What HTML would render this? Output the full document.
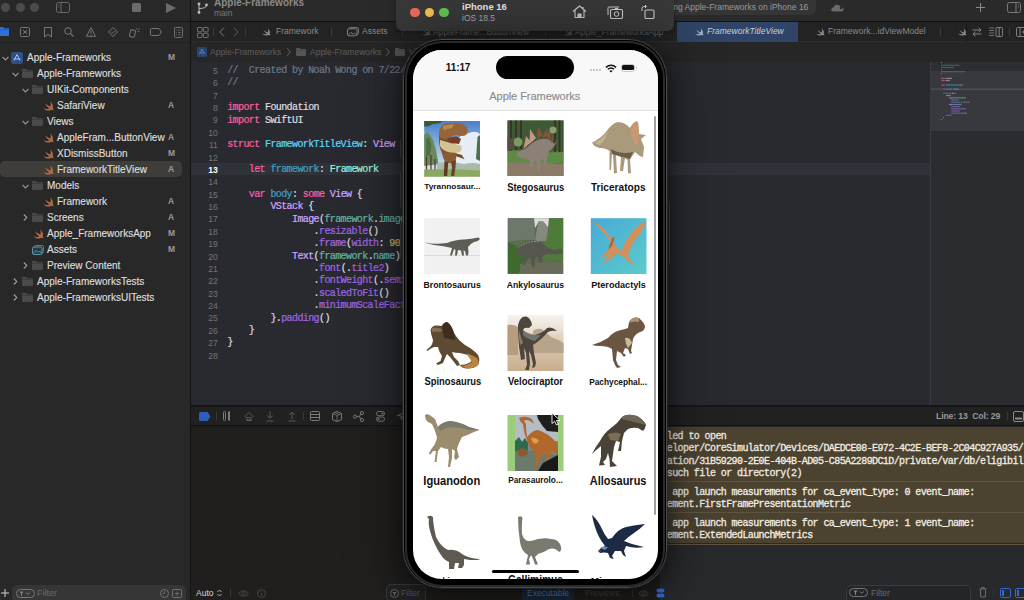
<!DOCTYPE html>
<html><head><meta charset="utf-8">
<style>
*{margin:0;padding:0;box-sizing:border-box}
html,body{width:1024px;height:600px;overflow:hidden;background:#262626;font-family:"Liberation Sans",sans-serif;position:relative}
.a{position:absolute}
.t{position:absolute;white-space:nowrap;line-height:1}
.mono{font-family:"Liberation Mono",monospace;-webkit-text-stroke:0.2px}
svg{position:absolute;overflow:visible}
</style></head><body>

<!-- LEFT NAVIGATOR -->
<div class="a" id="nav" style="left:0;top:0;width:190px;height:600px;background:#282828"></div>
<div class="a" style="left:0;top:21px;width:190px;height:1px;background:#1a1a1a"></div>
<div class="a" style="left:0;top:42px;width:190px;height:1px;background:#1f1f1f"></div>
<div class="a" style="left:190px;top:0;width:1px;height:600px;background:#121212"></div>
<div class="a" style="left:0;top:161px;width:182px;height:16px;background:#3e3d3a;border-radius:5px"></div>
<svg style="left:2px;top:55.5px" width="7" height="5"><path d="M0.5 0.8L3.5 3.8L6.5 0.8" stroke="#9a9a9a" stroke-width="1.2" fill="none"/></svg>
<svg style="left:11px;top:51.5px" width="12" height="12"><rect x="0" y="0" width="12" height="12" rx="2.2" fill="#2e5089"/><path d="M6 2.5L3 8.5M6 2.5L9 8.5M2.5 7H9.5" stroke="#a9c2ea" stroke-width="1" fill="none"/></svg>
<div class="t" style="left:27px;top:52.6px;font-size:10px;color:#dedede;-webkit-text-stroke:0.15px #dedede">Apple-Frameworks</div>
<div class="t" style="left:168px;top:53.0px;font-size:8.5px;font-weight:bold;color:#9a9a9a">M</div>
<svg style="left:12px;top:71.5px" width="7" height="5"><path d="M0.5 0.8L3.5 3.8L6.5 0.8" stroke="#9a9a9a" stroke-width="1.2" fill="none"/></svg>
<svg style="left:22px;top:69.0px" width="11" height="9"><path d="M0 1.2Q0 0 1.2 0H4L5 1.2H9.8Q11 1.2 11 2.4V7.8Q11 9 9.8 9H1.2Q0 9 0 7.8Z" fill="#4a4a4a"/><rect x="0" y="2.2" width="11" height="0.8" fill="#3a3a3a"/></svg>
<div class="t" style="left:37px;top:68.6px;font-size:10px;color:#dedede;-webkit-text-stroke:0.15px #dedede">Apple-Frameworks</div>
<svg style="left:22px;top:87.5px" width="7" height="5"><path d="M0.5 0.8L3.5 3.8L6.5 0.8" stroke="#9a9a9a" stroke-width="1.2" fill="none"/></svg>
<svg style="left:32px;top:85.0px" width="11" height="9"><path d="M0 1.2Q0 0 1.2 0H4L5 1.2H9.8Q11 1.2 11 2.4V7.8Q11 9 9.8 9H1.2Q0 9 0 7.8Z" fill="#4a4a4a"/><rect x="0" y="2.2" width="11" height="0.8" fill="#3a3a3a"/></svg>
<div class="t" style="left:47px;top:84.6px;font-size:10px;color:#dedede;-webkit-text-stroke:0.15px #dedede">UIKit-Components</div>
<svg style="left:43px;top:100.5px" width="11" height="10"><path d="M7.2 0.6C9.6 2.4 10.6 5 9.8 7.2C10.6 8.2 10.6 9.2 10.4 9.6C9.8 8.8 8.8 8.6 8 9C5.6 10.2 2.2 9.4 0 7C2.2 8.2 4.6 8.4 6.2 7.4C4.4 6.2 2.6 4.2 1.4 2.6C2.8 3.8 4.6 5.2 5.6 5.8C4.4 4.8 3 3.2 2.2 1.8C3.8 3.4 6 5.2 7.2 5.8C8 4.2 8 2.4 7.2 0.6Z" fill="#b26a3e"/></svg>
<div class="t" style="left:57px;top:100.6px;font-size:10px;color:#dedede;-webkit-text-stroke:0.15px #dedede">SafariView</div>
<div class="t" style="left:168px;top:101.0px;font-size:8.5px;font-weight:bold;color:#9a9a9a">A</div>
<svg style="left:22px;top:119.5px" width="7" height="5"><path d="M0.5 0.8L3.5 3.8L6.5 0.8" stroke="#9a9a9a" stroke-width="1.2" fill="none"/></svg>
<svg style="left:32px;top:117.0px" width="11" height="9"><path d="M0 1.2Q0 0 1.2 0H4L5 1.2H9.8Q11 1.2 11 2.4V7.8Q11 9 9.8 9H1.2Q0 9 0 7.8Z" fill="#4a4a4a"/><rect x="0" y="2.2" width="11" height="0.8" fill="#3a3a3a"/></svg>
<div class="t" style="left:47px;top:116.6px;font-size:10px;color:#dedede;-webkit-text-stroke:0.15px #dedede">Views</div>
<svg style="left:43px;top:132.5px" width="11" height="10"><path d="M7.2 0.6C9.6 2.4 10.6 5 9.8 7.2C10.6 8.2 10.6 9.2 10.4 9.6C9.8 8.8 8.8 8.6 8 9C5.6 10.2 2.2 9.4 0 7C2.2 8.2 4.6 8.4 6.2 7.4C4.4 6.2 2.6 4.2 1.4 2.6C2.8 3.8 4.6 5.2 5.6 5.8C4.4 4.8 3 3.2 2.2 1.8C3.8 3.4 6 5.2 7.2 5.8C8 4.2 8 2.4 7.2 0.6Z" fill="#b26a3e"/></svg>
<div class="t" style="left:57px;top:132.6px;font-size:10px;color:#dedede;-webkit-text-stroke:0.15px #dedede">AppleFram...ButtonView</div>
<div class="t" style="left:168px;top:133.0px;font-size:8.5px;font-weight:bold;color:#9a9a9a">A</div>
<svg style="left:43px;top:148.5px" width="11" height="10"><path d="M7.2 0.6C9.6 2.4 10.6 5 9.8 7.2C10.6 8.2 10.6 9.2 10.4 9.6C9.8 8.8 8.8 8.6 8 9C5.6 10.2 2.2 9.4 0 7C2.2 8.2 4.6 8.4 6.2 7.4C4.4 6.2 2.6 4.2 1.4 2.6C2.8 3.8 4.6 5.2 5.6 5.8C4.4 4.8 3 3.2 2.2 1.8C3.8 3.4 6 5.2 7.2 5.8C8 4.2 8 2.4 7.2 0.6Z" fill="#b26a3e"/></svg>
<div class="t" style="left:57px;top:148.6px;font-size:10px;color:#dedede;-webkit-text-stroke:0.15px #dedede">XDismissButton</div>
<div class="t" style="left:168px;top:149.0px;font-size:8.5px;font-weight:bold;color:#9a9a9a">M</div>
<svg style="left:43px;top:164.5px" width="11" height="10"><path d="M7.2 0.6C9.6 2.4 10.6 5 9.8 7.2C10.6 8.2 10.6 9.2 10.4 9.6C9.8 8.8 8.8 8.6 8 9C5.6 10.2 2.2 9.4 0 7C2.2 8.2 4.6 8.4 6.2 7.4C4.4 6.2 2.6 4.2 1.4 2.6C2.8 3.8 4.6 5.2 5.6 5.8C4.4 4.8 3 3.2 2.2 1.8C3.8 3.4 6 5.2 7.2 5.8C8 4.2 8 2.4 7.2 0.6Z" fill="#b26a3e"/></svg>
<div class="t" style="left:57px;top:164.6px;font-size:10px;color:#dedede;-webkit-text-stroke:0.15px #dedede">FrameworkTitleView</div>
<div class="t" style="left:168px;top:165.0px;font-size:8.5px;font-weight:bold;color:#9a9a9a">A</div>
<svg style="left:22px;top:183.5px" width="7" height="5"><path d="M0.5 0.8L3.5 3.8L6.5 0.8" stroke="#9a9a9a" stroke-width="1.2" fill="none"/></svg>
<svg style="left:32px;top:181.0px" width="11" height="9"><path d="M0 1.2Q0 0 1.2 0H4L5 1.2H9.8Q11 1.2 11 2.4V7.8Q11 9 9.8 9H1.2Q0 9 0 7.8Z" fill="#4a4a4a"/><rect x="0" y="2.2" width="11" height="0.8" fill="#3a3a3a"/></svg>
<div class="t" style="left:47px;top:180.6px;font-size:10px;color:#dedede;-webkit-text-stroke:0.15px #dedede">Models</div>
<svg style="left:43px;top:196.5px" width="11" height="10"><path d="M7.2 0.6C9.6 2.4 10.6 5 9.8 7.2C10.6 8.2 10.6 9.2 10.4 9.6C9.8 8.8 8.8 8.6 8 9C5.6 10.2 2.2 9.4 0 7C2.2 8.2 4.6 8.4 6.2 7.4C4.4 6.2 2.6 4.2 1.4 2.6C2.8 3.8 4.6 5.2 5.6 5.8C4.4 4.8 3 3.2 2.2 1.8C3.8 3.4 6 5.2 7.2 5.8C8 4.2 8 2.4 7.2 0.6Z" fill="#b26a3e"/></svg>
<div class="t" style="left:57px;top:196.6px;font-size:10px;color:#dedede;-webkit-text-stroke:0.15px #dedede">Framework</div>
<div class="t" style="left:168px;top:197.0px;font-size:8.5px;font-weight:bold;color:#9a9a9a">A</div>
<svg style="left:23px;top:214.0px" width="5" height="7"><path d="M0.8 0.5L3.8 3.5L0.8 6.5" stroke="#9a9a9a" stroke-width="1.2" fill="none"/></svg>
<svg style="left:32px;top:213.0px" width="11" height="9"><path d="M0 1.2Q0 0 1.2 0H4L5 1.2H9.8Q11 1.2 11 2.4V7.8Q11 9 9.8 9H1.2Q0 9 0 7.8Z" fill="#4a4a4a"/><rect x="0" y="2.2" width="11" height="0.8" fill="#3a3a3a"/></svg>
<div class="t" style="left:47px;top:212.6px;font-size:10px;color:#dedede;-webkit-text-stroke:0.15px #dedede">Screens</div>
<div class="t" style="left:168px;top:213.0px;font-size:8.5px;font-weight:bold;color:#9a9a9a">A</div>
<svg style="left:33px;top:228.5px" width="11" height="10"><path d="M7.2 0.6C9.6 2.4 10.6 5 9.8 7.2C10.6 8.2 10.6 9.2 10.4 9.6C9.8 8.8 8.8 8.6 8 9C5.6 10.2 2.2 9.4 0 7C2.2 8.2 4.6 8.4 6.2 7.4C4.4 6.2 2.6 4.2 1.4 2.6C2.8 3.8 4.6 5.2 5.6 5.8C4.4 4.8 3 3.2 2.2 1.8C3.8 3.4 6 5.2 7.2 5.8C8 4.2 8 2.4 7.2 0.6Z" fill="#b26a3e"/></svg>
<div class="t" style="left:47px;top:228.6px;font-size:10px;color:#dedede;-webkit-text-stroke:0.15px #dedede">Apple_FrameworksApp</div>
<div class="t" style="left:168px;top:229.0px;font-size:8.5px;font-weight:bold;color:#9a9a9a">M</div>
<svg style="left:32px;top:244.5px" width="12" height="10"><rect x="2" y="0.5" width="9.5" height="7.5" rx="1.5" fill="none" stroke="#4e7f96" stroke-width="1"/><rect x="0.5" y="2" width="9.5" height="7.5" rx="1.5" fill="#2c3a40" stroke="#5f9ab5" stroke-width="1"/><path d="M1.5 8.5L4 5.5L6 7.5L7.5 6L9.5 8.5" stroke="#5f9ab5" stroke-width="0.9" fill="none"/></svg>
<div class="t" style="left:47px;top:244.6px;font-size:10px;color:#dedede;-webkit-text-stroke:0.15px #dedede">Assets</div>
<div class="t" style="left:168px;top:245.0px;font-size:8.5px;font-weight:bold;color:#9a9a9a">M</div>
<svg style="left:23px;top:262.0px" width="5" height="7"><path d="M0.8 0.5L3.8 3.5L0.8 6.5" stroke="#9a9a9a" stroke-width="1.2" fill="none"/></svg>
<svg style="left:32px;top:261.0px" width="11" height="9"><path d="M0 1.2Q0 0 1.2 0H4L5 1.2H9.8Q11 1.2 11 2.4V7.8Q11 9 9.8 9H1.2Q0 9 0 7.8Z" fill="#4a4a4a"/><rect x="0" y="2.2" width="11" height="0.8" fill="#3a3a3a"/></svg>
<div class="t" style="left:47px;top:260.6px;font-size:10px;color:#dedede;-webkit-text-stroke:0.15px #dedede">Preview Content</div>
<svg style="left:13px;top:278.0px" width="5" height="7"><path d="M0.8 0.5L3.8 3.5L0.8 6.5" stroke="#9a9a9a" stroke-width="1.2" fill="none"/></svg>
<svg style="left:22px;top:277.0px" width="11" height="9"><path d="M0 1.2Q0 0 1.2 0H4L5 1.2H9.8Q11 1.2 11 2.4V7.8Q11 9 9.8 9H1.2Q0 9 0 7.8Z" fill="#4a4a4a"/><rect x="0" y="2.2" width="11" height="0.8" fill="#3a3a3a"/></svg>
<div class="t" style="left:37px;top:276.6px;font-size:10px;color:#dedede;-webkit-text-stroke:0.15px #dedede">Apple-FrameworksTests</div>
<svg style="left:13px;top:294.0px" width="5" height="7"><path d="M0.8 0.5L3.8 3.5L0.8 6.5" stroke="#9a9a9a" stroke-width="1.2" fill="none"/></svg>
<svg style="left:22px;top:293.0px" width="11" height="9"><path d="M0 1.2Q0 0 1.2 0H4L5 1.2H9.8Q11 1.2 11 2.4V7.8Q11 9 9.8 9H1.2Q0 9 0 7.8Z" fill="#4a4a4a"/><rect x="0" y="2.2" width="11" height="0.8" fill="#3a3a3a"/></svg>
<div class="t" style="left:37px;top:292.6px;font-size:10px;color:#dedede;-webkit-text-stroke:0.15px #dedede">Apple-FrameworksUITests</div>
<!-- traffic lights dim -->
<div class="a" style="left:1.3px;top:3px;width:9px;height:9px;border-radius:50%;background:#4b4b4b"></div>
<div class="a" style="left:15.5px;top:3px;width:9px;height:9px;border-radius:50%;background:#4b4b4b"></div>
<div class="a" style="left:30.2px;top:3px;width:9px;height:9px;border-radius:50%;background:#4b4b4b"></div>
<!-- sidebar icon -->
<svg style="left:55.5px;top:1.5px" width="14" height="11"><rect x="0.5" y="0.5" width="13" height="10" rx="2" fill="none" stroke="#6a6a6a" stroke-width="1"/><path d="M5 0.5V10.5" stroke="#6a6a6a" stroke-width="1"/><path d="M2 3H3.5M2 5H3.5" stroke="#6a6a6a" stroke-width="0.8"/></svg>
<!-- stop -->
<div class="a" style="left:132px;top:3px;width:9px;height:8.5px;border-radius:1.5px;background:#6b6b6b"></div>
<!-- play -->
<svg style="left:166px;top:2.5px" width="10" height="10"><path d="M0 0L10 5L0 10Z" fill="#6b6b6b"/></svg>

<!-- navigator tab icons -->
<svg style="left:0;top:27px" width="9" height="9"><path d="M-2 0H3L4 1.3H9V9H-2Z" fill="#2f6fd6"/><rect x="-2" y="2.4" width="11" height="0.7" fill="#2459b0"/></svg>
<svg style="left:20px;top:27px" width="10" height="10"><rect x="0.5" y="0.5" width="9" height="9" rx="1.2" fill="none" stroke="#777" stroke-width="1"/><path d="M3 3L7 7M7 3L3 7" stroke="#777" stroke-width="1"/></svg>
<svg style="left:44px;top:26.5px" width="8" height="11"><path d="M0.5 0.5H7.5V10L4 7.5L0.5 10Z" fill="none" stroke="#777" stroke-width="1"/></svg>
<svg style="left:64px;top:27px" width="10" height="10"><circle cx="4" cy="4" r="3.3" fill="none" stroke="#777" stroke-width="1"/><path d="M6.5 6.5L9.5 9.5" stroke="#777" stroke-width="1.1"/></svg>
<svg style="left:86px;top:26.5px" width="10" height="10"><path d="M5 0.7L9.5 9.3H0.5Z" fill="none" stroke="#777" stroke-width="1" stroke-linejoin="round"/><path d="M5 3.8V6.5M5 7.4V8.3" stroke="#777" stroke-width="1"/></svg>
<svg style="left:108px;top:27px" width="10" height="10"><path d="M5 0.5L9.5 5L5 9.5L0.5 5Z" fill="none" stroke="#777" stroke-width="1" stroke-linejoin="round"/><path d="M3.3 5L4.5 6.2L6.8 3.8" stroke="#777" stroke-width="1" fill="none"/></svg>
<svg style="left:129px;top:27px" width="11" height="11"><rect x="1" y="3" width="5" height="7" rx="1" transform="rotate(15 3.5 6.5)" fill="none" stroke="#777" stroke-width="1"/><path d="M7 1L8 3M9 2.5L10.5 1.5M8.5 4.5H10.5" stroke="#777" stroke-width="0.8"/></svg>
<svg style="left:150px;top:28px" width="12" height="8"><path d="M0.5 1.5Q0.5 0.5 1.5 0.5H9L11.5 4L9 7.5H1.5Q0.5 7.5 0.5 6.5Z" fill="none" stroke="#777" stroke-width="1"/></svg>
<svg style="left:174px;top:26.5px" width="9" height="11"><rect x="0.5" y="0.5" width="8" height="10" rx="1.2" fill="none" stroke="#777" stroke-width="0.9"/><path d="M2.2 3.2H2.8M2.2 5.5H2.8M2.2 7.8H2.8" stroke="#777" stroke-width="0.9"/><path d="M4 3.2H6.8M4 5.5H6.8M4 7.8H6.8" stroke="#777" stroke-width="0.7"/></svg>

<!-- bottom filter -->
<svg style="left:1px;top:589px" width="8" height="8"><path d="M4 0V8M0 4H8" stroke="#cfcfcf" stroke-width="1"/></svg>
<div class="a" style="left:12px;top:585px;width:174px;height:18px;border-radius:5px;background:#363636"></div>
<div class="a" style="left:15.5px;top:588.5px;width:19px;height:9px;border-radius:5px;border:1px solid #777"></div>
<svg style="left:19px;top:590.5px" width="12" height="6"><path d="M0.5 0.5H4.5L3 2.5V4.5L2 5V2.5Z" fill="#888"/><path d="M7 1.5L8.8 3.3L10.6 1.5" stroke="#888" stroke-width="1" fill="none"/></svg>
<div class="t" style="left:37px;top:588.8px;font-size:9px;color:#6a6a6a">Filter</div>
<svg style="left:160px;top:588.5px" width="9" height="9"><circle cx="4.5" cy="4.5" r="4" fill="none" stroke="#777" stroke-width="0.9"/><path d="M4.5 2V4.5H2.5" stroke="#777" stroke-width="0.8" fill="none"/></svg>
<svg style="left:172px;top:588.5px" width="10" height="9"><rect x="0.5" y="0.5" width="9" height="8" rx="1" fill="none" stroke="#777" stroke-width="0.9"/><path d="M3 4.5H7M5 2.5V6.5" stroke="#777" stroke-width="0.8"/></svg>


<!-- EDITOR bars -->
<div class="a" style="left:191px;top:0;width:833px;height:21px;background:#2a2a2a"></div>
<div class="a" style="left:191px;top:21px;width:833px;height:1px;background:#121212"></div>
<div class="a" style="left:191px;top:22px;width:833px;height:20px;background:#232323"></div>
<div class="a" style="left:191px;top:41px;width:833px;height:1px;background:#2e2e2e"></div>
<div class="a" style="left:191px;top:42px;width:833px;height:20px;background:#262626"></div>
<div class="a" style="left:191px;top:62px;width:739px;height:343px;background:#292a30"></div>
<div class="a" style="left:191px;top:163px;width:739px;height:12px;background:#2f3239"></div>

<div class="t" style="left:197px;top:66.90px;width:20.8px;text-align:right;font-size:8.6px;color:#747478;">5</div>
<div class="t mono" style="left:227.2px;top:66.00px;font-size:10px;letter-spacing:-0.6px"><span style="color:#6c7986">//&nbsp;&nbsp;Created&nbsp;by&nbsp;Noah&nbsp;Wong&nbsp;on&nbsp;7/22/25.</span></div>
<div class="t" style="left:197px;top:79.28px;width:20.8px;text-align:right;font-size:8.6px;color:#747478;">6</div>
<div class="t mono" style="left:227.2px;top:78.38px;font-size:10px;letter-spacing:-0.6px"><span style="color:#6c7986">//</span></div>
<div class="t" style="left:197px;top:91.65px;width:20.8px;text-align:right;font-size:8.6px;color:#747478;">7</div>
<div class="t" style="left:197px;top:104.02px;width:20.8px;text-align:right;font-size:8.6px;color:#747478;">8</div>
<div class="t mono" style="left:227.2px;top:103.12px;font-size:10px;letter-spacing:-0.6px"><span style="color:#fc5fa3">import</span><span style="color:#dfdfe0">&nbsp;Foundation</span></div>
<div class="t" style="left:197px;top:116.40px;width:20.8px;text-align:right;font-size:8.6px;color:#747478;">9</div>
<div class="t mono" style="left:227.2px;top:115.50px;font-size:10px;letter-spacing:-0.6px"><span style="color:#fc5fa3">import</span><span style="color:#dfdfe0">&nbsp;SwiftUI</span></div>
<div class="t" style="left:197px;top:128.77px;width:20.8px;text-align:right;font-size:8.6px;color:#747478;">10</div>
<div class="t" style="left:197px;top:141.15px;width:20.8px;text-align:right;font-size:8.6px;color:#747478;">11</div>
<div class="t mono" style="left:227.2px;top:140.25px;font-size:10px;letter-spacing:-0.6px"><span style="color:#fc5fa3">struct</span><span style="color:#dfdfe0">&nbsp;</span><span style="color:#5dd8ff">FrameworkTitleView</span><span style="color:#dfdfe0">:&nbsp;</span><span style="color:#d0a8ff">View</span><span style="color:#dfdfe0">&nbsp;{</span></div>
<div class="t" style="left:197px;top:153.52px;width:20.8px;text-align:right;font-size:8.6px;color:#747478;">12</div>
<div class="t" style="left:197px;top:165.90px;width:20.8px;text-align:right;font-size:8.6px;color:#ffffff;font-weight:bold">13</div>
<div class="t mono" style="left:227.2px;top:165.00px;font-size:10px;letter-spacing:-0.6px"><span style="color:#dfdfe0">&nbsp;&nbsp;&nbsp;&nbsp;</span><span style="color:#fc5fa3">let</span><span style="color:#dfdfe0">&nbsp;</span><span style="color:#41a1c0">framework</span><span style="color:#dfdfe0">:&nbsp;</span><span style="color:#9ef1dd">Framework</span></div>
<div class="t" style="left:197px;top:178.28px;width:20.8px;text-align:right;font-size:8.6px;color:#747478;">14</div>
<div class="t" style="left:197px;top:190.65px;width:20.8px;text-align:right;font-size:8.6px;color:#747478;">15</div>
<div class="t mono" style="left:227.2px;top:189.75px;font-size:10px;letter-spacing:-0.6px"><span style="color:#dfdfe0">&nbsp;&nbsp;&nbsp;&nbsp;</span><span style="color:#fc5fa3">var</span><span style="color:#dfdfe0">&nbsp;</span><span style="color:#41a1c0">body</span><span style="color:#dfdfe0">:&nbsp;</span><span style="color:#fc5fa3">some</span><span style="color:#dfdfe0">&nbsp;</span><span style="color:#d0a8ff">View</span><span style="color:#dfdfe0">&nbsp;{</span></div>
<div class="t" style="left:197px;top:203.02px;width:20.8px;text-align:right;font-size:8.6px;color:#747478;">16</div>
<div class="t mono" style="left:227.2px;top:202.12px;font-size:10px;letter-spacing:-0.6px"><span style="color:#dfdfe0">&nbsp;&nbsp;&nbsp;&nbsp;&nbsp;&nbsp;&nbsp;&nbsp;</span><span style="color:#d0a8ff">VStack</span><span style="color:#dfdfe0">&nbsp;{</span></div>
<div class="t" style="left:197px;top:215.40px;width:20.8px;text-align:right;font-size:8.6px;color:#747478;">17</div>
<div class="t mono" style="left:227.2px;top:214.50px;font-size:10px;letter-spacing:-0.6px"><span style="color:#dfdfe0">&nbsp;&nbsp;&nbsp;&nbsp;&nbsp;&nbsp;&nbsp;&nbsp;&nbsp;&nbsp;&nbsp;&nbsp;</span><span style="color:#d0a8ff">Image</span><span style="color:#dfdfe0">(</span><span style="color:#67b7a4">framework</span><span style="color:#dfdfe0">.</span><span style="color:#67b7a4">imageName</span><span style="color:#dfdfe0">)</span></div>
<div class="t" style="left:197px;top:227.78px;width:20.8px;text-align:right;font-size:8.6px;color:#747478;">18</div>
<div class="t mono" style="left:227.2px;top:226.88px;font-size:10px;letter-spacing:-0.6px"><span style="color:#dfdfe0">&nbsp;&nbsp;&nbsp;&nbsp;&nbsp;&nbsp;&nbsp;&nbsp;&nbsp;&nbsp;&nbsp;&nbsp;&nbsp;&nbsp;&nbsp;&nbsp;.</span><span style="color:#a167e6">resizable</span><span style="color:#dfdfe0">()</span></div>
<div class="t" style="left:197px;top:240.15px;width:20.8px;text-align:right;font-size:8.6px;color:#747478;">19</div>
<div class="t mono" style="left:227.2px;top:239.25px;font-size:10px;letter-spacing:-0.6px"><span style="color:#dfdfe0">&nbsp;&nbsp;&nbsp;&nbsp;&nbsp;&nbsp;&nbsp;&nbsp;&nbsp;&nbsp;&nbsp;&nbsp;&nbsp;&nbsp;&nbsp;&nbsp;.</span><span style="color:#a167e6">frame</span><span style="color:#dfdfe0">(</span><span style="color:#a167e6">width</span><span style="color:#dfdfe0">:&nbsp;</span><span style="color:#d0bf69">90</span><span style="color:#dfdfe0">,&nbsp;</span><span style="color:#a167e6">height</span><span style="color:#dfdfe0">:&nbsp;</span><span style="color:#d0bf69">90</span><span style="color:#dfdfe0">)</span></div>
<div class="t" style="left:197px;top:252.52px;width:20.8px;text-align:right;font-size:8.6px;color:#747478;">20</div>
<div class="t mono" style="left:227.2px;top:251.62px;font-size:10px;letter-spacing:-0.6px"><span style="color:#dfdfe0">&nbsp;&nbsp;&nbsp;&nbsp;&nbsp;&nbsp;&nbsp;&nbsp;&nbsp;&nbsp;&nbsp;&nbsp;</span><span style="color:#d0a8ff">Text</span><span style="color:#dfdfe0">(</span><span style="color:#67b7a4">framework</span><span style="color:#dfdfe0">.</span><span style="color:#67b7a4">name</span><span style="color:#dfdfe0">)</span></div>
<div class="t" style="left:197px;top:264.90px;width:20.8px;text-align:right;font-size:8.6px;color:#747478;">21</div>
<div class="t mono" style="left:227.2px;top:264.00px;font-size:10px;letter-spacing:-0.6px"><span style="color:#dfdfe0">&nbsp;&nbsp;&nbsp;&nbsp;&nbsp;&nbsp;&nbsp;&nbsp;&nbsp;&nbsp;&nbsp;&nbsp;&nbsp;&nbsp;&nbsp;&nbsp;.</span><span style="color:#a167e6">font</span><span style="color:#dfdfe0">(.</span><span style="color:#a167e6">title2</span><span style="color:#dfdfe0">)</span></div>
<div class="t" style="left:197px;top:277.28px;width:20.8px;text-align:right;font-size:8.6px;color:#747478;">22</div>
<div class="t mono" style="left:227.2px;top:276.38px;font-size:10px;letter-spacing:-0.6px"><span style="color:#dfdfe0">&nbsp;&nbsp;&nbsp;&nbsp;&nbsp;&nbsp;&nbsp;&nbsp;&nbsp;&nbsp;&nbsp;&nbsp;&nbsp;&nbsp;&nbsp;&nbsp;.</span><span style="color:#a167e6">fontWeight</span><span style="color:#dfdfe0">(.</span><span style="color:#a167e6">semibold</span><span style="color:#dfdfe0">)</span></div>
<div class="t" style="left:197px;top:289.65px;width:20.8px;text-align:right;font-size:8.6px;color:#747478;">23</div>
<div class="t mono" style="left:227.2px;top:288.75px;font-size:10px;letter-spacing:-0.6px"><span style="color:#dfdfe0">&nbsp;&nbsp;&nbsp;&nbsp;&nbsp;&nbsp;&nbsp;&nbsp;&nbsp;&nbsp;&nbsp;&nbsp;&nbsp;&nbsp;&nbsp;&nbsp;.</span><span style="color:#a167e6">scaledToFit</span><span style="color:#dfdfe0">()</span></div>
<div class="t" style="left:197px;top:302.02px;width:20.8px;text-align:right;font-size:8.6px;color:#747478;">24</div>
<div class="t mono" style="left:227.2px;top:301.12px;font-size:10px;letter-spacing:-0.6px"><span style="color:#dfdfe0">&nbsp;&nbsp;&nbsp;&nbsp;&nbsp;&nbsp;&nbsp;&nbsp;&nbsp;&nbsp;&nbsp;&nbsp;&nbsp;&nbsp;&nbsp;&nbsp;.</span><span style="color:#a167e6">minimumScaleFactor</span><span style="color:#dfdfe0">(</span><span style="color:#d0bf69">0.6</span><span style="color:#dfdfe0">)</span></div>
<div class="t" style="left:197px;top:314.40px;width:20.8px;text-align:right;font-size:8.6px;color:#747478;">25</div>
<div class="t mono" style="left:227.2px;top:313.50px;font-size:10px;letter-spacing:-0.6px"><span style="color:#dfdfe0">&nbsp;&nbsp;&nbsp;&nbsp;&nbsp;&nbsp;&nbsp;&nbsp;}.</span><span style="color:#a167e6">padding</span><span style="color:#dfdfe0">()</span></div>
<div class="t" style="left:197px;top:326.78px;width:20.8px;text-align:right;font-size:8.6px;color:#747478;">26</div>
<div class="t mono" style="left:227.2px;top:325.88px;font-size:10px;letter-spacing:-0.6px"><span style="color:#dfdfe0">&nbsp;&nbsp;&nbsp;&nbsp;}</span></div>
<div class="t" style="left:197px;top:339.15px;width:20.8px;text-align:right;font-size:8.6px;color:#747478;">27</div>
<div class="t mono" style="left:227.2px;top:338.25px;font-size:10px;letter-spacing:-0.6px"><span style="color:#dfdfe0">}</span></div>
<div class="t" style="left:197px;top:351.52px;width:20.8px;text-align:right;font-size:8.6px;color:#747478;">28</div>
<!-- title -->
<svg style="left:197px;top:2px" width="11" height="12"><circle cx="2" cy="2" r="1.4" fill="#bdbdbd"/><circle cx="2" cy="10.5" r="1.4" fill="#bdbdbd"/><circle cx="9.5" cy="3" r="1.4" fill="#bdbdbd"/><path d="M2 2V10.5M9.5 3Q9.5 6.5 2 6.5" stroke="#bdbdbd" stroke-width="1" fill="none"/></svg>
<div class="t" style="left:214px;top:-2px;font-size:10px;font-weight:bold;color:#8a8a8a">Apple-Frameworks</div>
<div class="t" style="left:214px;top:9px;font-size:8.5px;color:#7a7a7a">main</div>
<!-- tab bar -->
<svg style="left:196.5px;top:26.5px" width="12" height="11"><rect x="0.5" y="0.5" width="4.6" height="4.3" rx="0.6" fill="none" stroke="#7a7a7a" stroke-width="0.9"/><rect x="6.5" y="0.5" width="4.6" height="4.3" rx="0.6" fill="none" stroke="#7a7a7a" stroke-width="0.9"/><rect x="0.5" y="6.2" width="4.6" height="4.3" rx="0.6" fill="none" stroke="#7a7a7a" stroke-width="0.9"/><rect x="6.5" y="6.2" width="4.6" height="4.3" rx="0.6" fill="none" stroke="#7a7a7a" stroke-width="0.9"/></svg>
<div class="a" style="left:213px;top:28px;width:1px;height:8px;background:#3a3a3a"></div>
<svg style="left:219px;top:27px" width="6" height="10"><path d="M5 0.5L0.8 5L5 9.5" stroke="#7a7a7a" stroke-width="1" fill="none"/></svg>
<svg style="left:233px;top:27px" width="6" height="10"><path d="M0.8 0.5L5 5L0.8 9.5" stroke="#5a5a5a" stroke-width="1" fill="none"/></svg>
<div class="a" style="left:245px;top:28px;width:1px;height:8px;background:#3a3a3a"></div>
<svg style="left:262px;top:27.5px" width="9" height="8"><path d="M5.6 0.4C7.6 1.8 8.4 3.8 7.7 5.6C8.3 6.4 8.3 7.2 8.2 7.6C7.7 7 6.9 6.8 6.3 7.1C4.4 8 1.7 7.4 0 5.5C1.7 6.4 3.6 6.6 4.9 5.8C3.5 4.9 2 3.3 1.1 2C2.2 3 3.6 4.1 4.4 4.6C3.5 3.8 2.4 2.5 1.7 1.4C3 2.7 4.7 4.1 5.6 4.6C6.3 3.3 6.3 1.9 5.6 0.4Z" fill="#8a8a8a"/></svg>
<div class="t" style="left:276px;top:27px;font-size:8.5px;color:#8a8a8a">Framework</div>
<div class="a" style="left:331px;top:28px;width:1px;height:8px;background:#3a3a3a"></div>
<svg style="left:347px;top:27px" width="12" height="9"><rect x="2" y="0.5" width="9.5" height="7" rx="1.3" fill="none" stroke="#7a7a7a" stroke-width="0.9"/><rect x="0.5" y="1.8" width="9.5" height="7" rx="1.3" fill="#232323" stroke="#8a8a8a" stroke-width="0.9"/><path d="M1.5 8L4 5.3L6 7.2L7.5 6L9.5 8" stroke="#8a8a8a" stroke-width="0.8" fill="none"/></svg>
<div class="t" style="left:362px;top:27px;font-size:8.5px;color:#8a8a8a">Assets</div>
<div class="a" style="left:402px;top:28px;width:1px;height:8px;background:#3a3a3a"></div>
<svg style="left:422px;top:28px" width="9" height="8"><path d="M5.6 0.4C7.6 1.8 8.4 3.8 7.7 5.6C8.3 6.4 8.3 7.2 8.2 7.6C7.7 7 6.9 6.8 6.3 7.1C4.4 8 1.7 7.4 0 5.5C1.7 6.4 3.6 6.6 4.9 5.8C3.5 4.9 2 3.3 1.1 2C2.2 3 3.6 4.1 4.4 4.6C3.5 3.8 2.4 2.5 1.7 1.4C3 2.7 4.7 4.1 5.6 4.6C6.3 3.3 6.3 1.9 5.6 0.4Z" fill="#5a5a5a"/></svg>
<div class="t" style="left:433px;top:28px;font-size:8.5px;color:#6a6a6a">AppleFrame...ButtonView</div>
<div class="a" style="left:544.5px;top:28px;width:1px;height:8px;background:#3a3a3a"></div>
<svg style="left:564px;top:28px" width="9" height="8"><path d="M5.6 0.4C7.6 1.8 8.4 3.8 7.7 5.6C8.3 6.4 8.3 7.2 8.2 7.6C7.7 7 6.9 6.8 6.3 7.1C4.4 8 1.7 7.4 0 5.5C1.7 6.4 3.6 6.6 4.9 5.8C3.5 4.9 2 3.3 1.1 2C2.2 3 3.6 4.1 4.4 4.6C3.5 3.8 2.4 2.5 1.7 1.4C3 2.7 4.7 4.1 5.6 4.6C6.3 3.3 6.3 1.9 5.6 0.4Z" fill="#5a5a5a"/></svg>
<div class="t" style="left:575px;top:28px;font-size:8.5px;color:#6a6a6a">Apple_FrameworksApp</div>

<!-- active tab -->
<div class="a" style="left:677px;top:22px;width:121px;height:20px;background:#2f4466"></div>
<svg style="left:695px;top:28px" width="9" height="8"><path d="M5.6 0.4C7.6 1.8 8.4 3.8 7.7 5.6C8.3 6.4 8.3 7.2 8.2 7.6C7.7 7 6.9 6.8 6.3 7.1C4.4 8 1.7 7.4 0 5.5C1.7 6.4 3.6 6.6 4.9 5.8C3.5 4.9 2 3.3 1.1 2C2.2 3 3.6 4.1 4.4 4.6C3.5 3.8 2.4 2.5 1.7 1.4C3 2.7 4.7 4.1 5.6 4.6C6.3 3.3 6.3 1.9 5.6 0.4Z" fill="#a8b4c8"/></svg>
<div class="t" style="left:707px;top:27px;font-size:8.5px;font-style:italic;color:#c8d0dc">FrameworkTitleView</div>
<svg style="left:816px;top:28px" width="9" height="8"><path d="M5.6 0.4C7.6 1.8 8.4 3.8 7.7 5.6C8.3 6.4 8.3 7.2 8.2 7.6C7.7 7 6.9 6.8 6.3 7.1C4.4 8 1.7 7.4 0 5.5C1.7 6.4 3.6 6.6 4.9 5.8C3.5 4.9 2 3.3 1.1 2C2.2 3 3.6 4.1 4.4 4.6C3.5 3.8 2.4 2.5 1.7 1.4C3 2.7 4.7 4.1 5.6 4.6C6.3 3.3 6.3 1.9 5.6 0.4Z" fill="#8a8a8a"/></svg>
<div class="t" style="left:828px;top:27px;font-size:8.5px;color:#8a8a8a">Framework...idViewModel</div>
<div class="a" style="left:940px;top:28px;width:1px;height:8px;background:#3a3a3a"></div>
<div class="a" style="left:966px;top:22px;width:1px;height:20px;background:#1a1a1a"></div>
<svg style="left:958px;top:28px" width="9" height="8"><path d="M5.6 0.4C7.6 1.8 8.4 3.8 7.7 5.6C8.3 6.4 8.3 7.2 8.2 7.6C7.7 7 6.9 6.8 6.3 7.1C4.4 8 1.7 7.4 0 5.5C1.7 6.4 3.6 6.6 4.9 5.8C3.5 4.9 2 3.3 1.1 2C2.2 3 3.6 4.1 4.4 4.6C3.5 3.8 2.4 2.5 1.7 1.4C3 2.7 4.7 4.1 5.6 4.6C6.3 3.3 6.3 1.9 5.6 0.4Z" fill="#8a8a8a"/></svg>
<svg style="left:972px;top:27px" width="10" height="10"><path d="M0.5 3H9M6.5 0.8L9 3L6.5 5.2M9.5 7H1M3.5 4.8L1 7L3.5 9.2" stroke="#8a8a8a" stroke-width="0.9" fill="none"/></svg>
<svg style="left:989px;top:26.5px" width="14" height="10"><path d="M0 1H5M0 3.5H5M0 6H5M0 8.5H5" stroke="#7a7a7a" stroke-width="0.9"/><rect x="7" y="0.5" width="6.5" height="9" rx="1" fill="none" stroke="#8a8a8a" stroke-width="0.9"/><path d="M10.2 0.5V9.5" stroke="#8a8a8a" stroke-width="0.9"/></svg>
<div class="a" style="left:1009px;top:28px;width:1px;height:8px;background:#3a3a3a"></div>
<svg style="left:1016px;top:26.5px" width="12" height="10"><rect x="0.5" y="0.5" width="11" height="9" rx="1.3" fill="none" stroke="#8a8a8a" stroke-width="0.9"/><path d="M4 0.5V9.5M6 5H10M8 3V7" stroke="#8a8a8a" stroke-width="0.9"/></svg>

<!-- status pill + top right -->
<div class="a" style="left:640px;top:-6px;width:176px;height:20.5px;border-radius:6px;background:#353535"></div>
<div class="t" style="left:651px;top:3px;font-size:8.5px;color:#9a9a9a">Running Apple-Frameworks on iPhone 16</div>
<svg style="left:831px;top:4px" width="13" height="8"><path d="M2.5 7.5Q0 7.5 0.3 5.3Q0.6 3.5 2.6 3.6Q3.4 0.6 6.4 0.8Q8.8 1 9.6 3.1Q12.6 3.2 12.6 5.4Q12.5 7.5 10.3 7.5Z" fill="#6a6a6a"/><circle cx="10" cy="4" r="1.3" fill="#2a2a2a"/></svg>
<svg style="left:976px;top:3px" width="9" height="9"><path d="M4.5 0V9M0 4.5H9" stroke="#8a8a8a" stroke-width="1"/></svg>
<svg style="left:1007px;top:1.5px" width="14" height="11"><rect x="0.5" y="0.5" width="13" height="10" rx="2" fill="none" stroke="#7a7a7a" stroke-width="1"/><path d="M9 0.5V10.5" stroke="#7a7a7a" stroke-width="1"/><path d="M10.8 3H12M10.8 5H12" stroke="#7a7a7a" stroke-width="0.8"/></svg>

<!-- breadcrumb -->
<svg style="left:196.5px;top:47px" width="10" height="10"><rect x="0" y="0" width="10" height="10" rx="1.8" fill="#2a4570"/><path d="M5 2L2.6 7M5 2L7.4 7M2.2 6H7.8" stroke="#5f7fb0" stroke-width="0.9" fill="none"/></svg>
<div class="t" style="left:210px;top:47.5px;font-size:8.5px;color:#5f5f5f">Apple-Frameworks</div>
<svg style="left:286px;top:48px" width="5" height="8"><path d="M0.5 0.3L3.8 4L0.5 7.7L1.6 7.7L4.9 4L1.6 0.3Z" fill="#5f5f5f"/></svg>
<svg style="left:296px;top:47.5px" width="10" height="8"><path d="M0 1Q0 0 1 0H3.6L4.5 1H9Q10 1 10 2V7Q10 8 9 8H1Q0 8 0 7Z" fill="#555"/><rect x="0" y="2" width="10" height="0.7" fill="#444"/></svg>
<div class="t" style="left:310px;top:47.5px;font-size:8.5px;color:#5f5f5f">Apple-Frameworks</div>
<svg style="left:385px;top:48px" width="5" height="8"><path d="M0.5 0.3L3.8 4L0.5 7.7L1.6 7.7L4.9 4L1.6 0.3Z" fill="#5f5f5f"/></svg>
<svg style="left:395px;top:47.5px" width="10" height="8"><path d="M0 1Q0 0 1 0H3.6L4.5 1H9Q10 1 10 2V7Q10 8 9 8H1Q0 8 0 7Z" fill="#555"/><rect x="0" y="2" width="10" height="0.7" fill="#444"/></svg>
<div class="t" style="left:409px;top:47.5px;font-size:8.5px;color:#5f5f5f">Views</div>

<!-- minimap -->
<div class="a" style="left:930px;top:62px;width:94px;height:343px;background:#2b2c30"></div>
<div class="a" style="left:930px;top:62px;width:1px;height:343px;background:#3a3b3f"></div>
<div class="a" style="left:931px;top:62px;width:93px;height:9px;background:#2d2e33"></div>
<div class="a" style="left:931px;top:70.8px;width:93px;height:60px;background:#38393e"></div>
<svg style="left:931px;top:62px" width="93" height="80"><rect x="0" y="26.3" width="93" height="1.8" fill="#4a4b50"/><rect x="10.17" y="-0.10" width="0.83" height="1.2" fill="#8a8a8e"/><rect x="10.17" y="2.73" width="18.17" height="1.2" fill="#4a5566"/><rect x="10.17" y="4.90" width="12.83" height="1.2" fill="#4a5566"/><rect x="10.17" y="7.07" width="0.83" height="1.2" fill="#8a8a8e"/><rect x="10.17" y="9.07" width="23.67" height="1.2" fill="#5a5c62"/><rect x="10.17" y="11.23" width="0.83" height="1.2" fill="#8a8a8e"/><rect x="10.17" y="15.73" width="3.67" height="1.2" fill="#a05478"/><rect x="14.67" y="15.73" width="6.33" height="1.2" fill="#8a8a8e"/><rect x="10.17" y="17.90" width="3.67" height="1.2" fill="#a05478"/><rect x="14.67" y="17.90" width="4.17" height="1.2" fill="#8a8a8e"/><rect x="10.17" y="22.40" width="3.67" height="1.2" fill="#a05478"/><rect x="14.67" y="22.40" width="12.50" height="1.2" fill="#3a7e98"/><rect x="27.67" y="22.40" width="2.83" height="1.2" fill="#8a76b0"/><rect x="31.00" y="22.40" width="0.83" height="1.2" fill="#8a8a8e"/><rect x="12.17" y="26.57" width="1.67" height="1.2" fill="#a05478"/><rect x="14.67" y="26.57" width="6.67" height="1.2" fill="#3a7e98"/><rect x="22.17" y="26.57" width="5.83" height="1.2" fill="#4f8a7a"/><rect x="12.17" y="30.73" width="1.67" height="1.2" fill="#a05478"/><rect x="14.67" y="30.73" width="2.50" height="1.2" fill="#3a7e98"/><rect x="18.00" y="30.73" width="2.50" height="1.2" fill="#a05478"/><rect x="21.00" y="30.73" width="2.33" height="1.2" fill="#8a76b0"/><rect x="24.17" y="30.73" width="0.83" height="1.2" fill="#8a8a8e"/><rect x="15.17" y="32.90" width="4.50" height="1.2" fill="#8a76b0"/><rect x="18.00" y="35.23" width="4.17" height="1.2" fill="#8a76b0"/><rect x="22.17" y="35.23" width="12.50" height="1.2" fill="#4f8a7a"/><rect x="20.17" y="37.40" width="7.50" height="1.2" fill="#6e58a0"/><rect x="20.17" y="39.57" width="9.17" height="1.2" fill="#6e58a0"/><rect x="30.00" y="39.57" width="1.00" height="1.2" fill="#8a7e4a"/><rect x="32.17" y="39.57" width="4.17" height="1.2" fill="#6e58a0"/><rect x="36.83" y="39.57" width="1.50" height="1.2" fill="#8a7e4a"/><rect x="18.00" y="41.90" width="3.33" height="1.2" fill="#8a76b0"/><rect x="21.33" y="41.90" width="9.17" height="1.2" fill="#4f8a7a"/><rect x="20.17" y="44.07" width="8.67" height="1.2" fill="#6e58a0"/><rect x="20.17" y="46.23" width="14.50" height="1.2" fill="#6e58a0"/><rect x="20.17" y="48.40" width="8.67" height="1.2" fill="#6e58a0"/><rect x="20.17" y="50.57" width="13.67" height="1.2" fill="#6e58a0"/><rect x="33.83" y="50.57" width="1.67" height="1.2" fill="#8a7e4a"/><rect x="15.17" y="52.73" width="5.33" height="1.2" fill="#6e58a0"/><rect x="12.17" y="54.90" width="0.83" height="1.2" fill="#8a8a8e"/><rect x="10.17" y="57.07" width="0.83" height="1.2" fill="#8a8a8e"/></svg>

<!-- debug bar -->
<div class="a" style="left:191px;top:405px;width:833px;height:21px;background:#212121"></div>
<div class="a" style="left:191px;top:405px;width:833px;height:1.5px;background:#161616"></div>
<div class="a" style="left:191px;top:425px;width:833px;height:1.5px;background:#121212"></div>
<!-- console left -->
<div class="a" style="left:191px;top:426px;width:470px;height:174px;background:#201f1d"></div>
<!-- console right -->
<div class="a" style="left:660px;top:426px;width:364px;height:174px;background:#28292d"></div>
<!-- bottom bar -->


<!-- debug bar icons -->
<svg style="left:198.5px;top:411.5px" width="12" height="9"><path d="M0 1.5Q0 0 1.5 0H8.5L11.5 4.5L8.5 9H1.5Q0 9 0 7.5Z" fill="#2f5eb8"/></svg>
<div class="a" style="left:215.5px;top:412px;width:1px;height:8px;background:#3a3a3a"></div>
<div class="a" style="left:223px;top:411px;width:2.6px;height:10px;border-radius:1.3px;border:1px solid #7a7a7a"></div>
<div class="a" style="left:227.8px;top:411px;width:2.6px;height:10px;border-radius:1.3px;border:1px solid #7a7a7a"></div>
<svg style="left:244px;top:411px" width="10" height="10"><path d="M0.5 6L5 1.5L9.5 6" stroke="#5a5a5a" stroke-width="1" fill="none"/><path d="M2.5 9.5H7.5" stroke="#5a5a5a" stroke-width="1"/><rect x="2.5" y="6.5" width="5" height="2" fill="none" stroke="#5a5a5a" stroke-width="0.8"/></svg>
<svg style="left:265.5px;top:410.5px" width="8" height="11"><path d="M4 0.5V7M1.2 4.5L4 7.3L6.8 4.5M0.5 10H7.5" stroke="#5a5a5a" stroke-width="1" fill="none"/></svg>
<svg style="left:287.5px;top:410.5px" width="8" height="11"><path d="M4 8V1.5M1.2 4L4 1.2L6.8 4M0.5 10H7.5" stroke="#5a5a5a" stroke-width="1" fill="none"/></svg>
<div class="a" style="left:303px;top:412px;width:1px;height:8px;background:#3a3a3a"></div>
<svg style="left:310px;top:411px" width="10" height="10"><rect x="0.5" y="0.5" width="9" height="9" rx="1" fill="none" stroke="#7a7a7a" stroke-width="1"/><path d="M0.5 3.5H9.5M0.5 6.5H9.5" stroke="#7a7a7a" stroke-width="1"/></svg>
<svg style="left:332px;top:411px" width="10" height="11"><path d="M5 0.5L9.5 2.5V8.5L5 10.5L0.5 8.5V2.5Z" fill="none" stroke="#7a7a7a" stroke-width="1"/><path d="M0.5 2.5L5 4.5L9.5 2.5M5 4.5V10.5M3 1.6L7.3 3.6" stroke="#7a7a7a" stroke-width="0.8" fill="none"/></svg>
<svg style="left:353px;top:411px" width="11" height="11"><circle cx="2" cy="5.5" r="1.6" fill="none" stroke="#7a7a7a" stroke-width="1"/><circle cx="9" cy="2" r="1.6" fill="none" stroke="#7a7a7a" stroke-width="1"/><circle cx="9" cy="9" r="1.6" fill="none" stroke="#7a7a7a" stroke-width="1"/><path d="M3.5 5.5H6Q7 5.5 7.6 3M6 5.5Q7 5.5 7.6 8" stroke="#7a7a7a" stroke-width="0.9" fill="none"/></svg>
<svg style="left:376px;top:411px" width="9" height="11"><rect x="0.5" y="0.5" width="8" height="4.2" rx="2.1" fill="none" stroke="#7a7a7a" stroke-width="1"/><rect x="0.5" y="6" width="8" height="4.2" rx="2.1" fill="none" stroke="#7a7a7a" stroke-width="1"/><circle cx="6.4" cy="2.6" r="1" fill="#7a7a7a"/><circle cx="2.6" cy="8.1" r="1" fill="#7a7a7a"/></svg>
<svg style="left:397px;top:412px" width="8" height="8"><path d="M0.5 3.5L7.5 0.5L4.5 7.5L4 4Z" fill="none" stroke="#7a7a7a" stroke-width="0.9"/></svg>

<div class="t" style="left:936px;top:412px;font-size:8.6px;font-weight:bold;color:#9a9a9a;letter-spacing:-0.1px">Line: 13&nbsp;&nbsp;Col: 29</div>
<div class="a" style="left:1007px;top:412px;width:1px;height:8px;background:#3a3a3a"></div>
<svg style="left:1013px;top:410.5px" width="11" height="11"><rect x="0.5" y="0.5" width="10" height="10" rx="1.5" fill="none" stroke="#8a8a8a" stroke-width="1"/><rect x="2" y="6.5" width="7" height="2" fill="#8a8a8a"/></svg>

<!-- console brown log entries -->
<div class="a" style="left:660px;top:426.5px;width:364px;height:54.5px;background:#4b4230"></div>
<div class="a" style="left:660px;top:481px;width:364px;height:0.8px;background:#5e5442"></div>
<div class="a" style="left:660px;top:481.8px;width:364px;height:30.5px;background:#4b4230"></div>
<div class="a" style="left:660px;top:512.3px;width:364px;height:0.8px;background:#5e5442"></div>
<div class="a" style="left:660px;top:513.1px;width:364px;height:30.4px;background:#4b4230"></div>
<div class="a" style="left:660px;top:543.5px;width:364px;height:0.8px;background:#5e5442"></div>
<div class="t mono" style="left:666.8px;top:432.1px;font-size:10px;letter-spacing:-0.6px;color:#f2ede2;-webkit-text-stroke:0.3px #f2ede2">led&nbsp;to&nbsp;open</div>
<div class="t mono" style="left:666.8px;top:444.4px;font-size:10px;letter-spacing:-0.6px;color:#f2ede2;-webkit-text-stroke:0.3px #f2ede2">eloper/CoreSimulator/Devices/DAEDCE08-E972-4C2E-BEF8-2C04C927A935/</div>
<div class="t mono" style="left:666.8px;top:456.6px;font-size:10px;letter-spacing:-0.6px;color:#f2ede2;-webkit-text-stroke:0.3px #f2ede2">ation/31B59290-2E0E-404B-AD05-C85A2289DC1D/private/var/db/eligibil</div>
<div class="t mono" style="left:666.8px;top:468.8px;font-size:10px;letter-spacing:-0.6px;color:#f2ede2;-webkit-text-stroke:0.3px #f2ede2">such&nbsp;file&nbsp;or&nbsp;directory(2)</div>
<div class="t mono" style="left:666.8px;top:487.7px;font-size:10px;letter-spacing:-0.6px;color:#f2ede2;-webkit-text-stroke:0.3px #f2ede2">&nbsp;app&nbsp;launch&nbsp;measurements&nbsp;for&nbsp;ca_event_type:&nbsp;0&nbsp;event_name:</div>
<div class="t mono" style="left:666.8px;top:499.9px;font-size:10px;letter-spacing:-0.6px;color:#f2ede2;-webkit-text-stroke:0.3px #f2ede2">ement.FirstFramePresentationMetric</div>
<div class="t mono" style="left:666.8px;top:518.9px;font-size:10px;letter-spacing:-0.6px;color:#f2ede2;-webkit-text-stroke:0.3px #f2ede2">&nbsp;app&nbsp;launch&nbsp;measurements&nbsp;for&nbsp;ca_event_type:&nbsp;1&nbsp;event_name:</div>
<div class="t mono" style="left:666.8px;top:531.1px;font-size:10px;letter-spacing:-0.6px;color:#f2ede2;-webkit-text-stroke:0.3px #f2ede2">ement.ExtendedLaunchMetrics</div>

<!-- bottom bar -->
<div class="t" style="left:196px;top:589px;font-size:8.5px;color:#d8d8d8">Auto</div>
<svg style="left:217px;top:588.5px" width="5" height="8"><path d="M0.5 3L2.5 1L4.5 3M0.5 5L2.5 7L4.5 5" stroke="#bbb" stroke-width="0.9" fill="none"/></svg>
<div class="a" style="left:230px;top:589px;width:1px;height:8px;background:#3a3a3a"></div>
<svg style="left:237.5px;top:589.5px" width="11" height="7"><path d="M0.5 3.5Q5.5 -2 10.5 3.5Q5.5 9 0.5 3.5Z" fill="none" stroke="#4a4a4a" stroke-width="0.9"/><circle cx="5.5" cy="3.5" r="1.6" fill="none" stroke="#4a4a4a" stroke-width="0.9"/></svg>
<svg style="left:257px;top:588.5px" width="9" height="9"><circle cx="4.5" cy="4.5" r="4" fill="none" stroke="#4a4a4a" stroke-width="0.9"/><path d="M4.5 4V7M4.5 2.3V3" stroke="#4a4a4a" stroke-width="0.9"/></svg>
<div class="a" style="left:386px;top:584px;width:40px;height:18px;border-radius:5px;border:1px solid #3a3a3a;background:#232323"></div>
<svg style="left:390px;top:588.5px" width="9" height="9"><circle cx="4.5" cy="4.5" r="4" fill="none" stroke="#666" stroke-width="0.9"/><path d="M2.5 3H6.5L5 5V6.5L4 7V5Z" fill="#666"/></svg>
<div class="t" style="left:401px;top:589px;font-size:8.5px;color:#5a5a5a">Filter</div>

<div class="a" style="left:521.5px;top:587.5px;width:52.5px;height:16px;border-radius:4px;background:#1c2a3e"></div>
<div class="t" style="left:527px;top:589px;font-size:8.5px;color:#5f82b5">Executable</div>
<div class="t" style="left:585px;top:589px;font-size:8.5px;color:#4a4a4a">Previews</div>
<div class="a" style="left:632px;top:589px;width:1px;height:8px;background:#333"></div>
<svg style="left:638px;top:589.5px" width="11" height="7"><path d="M0.5 3.5Q5.5 -2 10.5 3.5Q5.5 9 0.5 3.5Z" fill="none" stroke="#4a4a4a" stroke-width="0.9"/><circle cx="5.5" cy="3.5" r="1.6" fill="none" stroke="#4a4a4a" stroke-width="0.9"/></svg>
<svg style="left:656px;top:588px" width="9" height="10"><rect x="0.5" y="0.5" width="8" height="4" rx="2" fill="#3569cf"/><rect x="0.5" y="5.5" width="8" height="4" rx="2" fill="#3569cf"/></svg>

<div class="a" style="left:846px;top:585px;width:124.5px;height:18px;border-radius:5px;background:#242529;border:1px solid #3a3b3e"></div>
<div class="a" style="left:849px;top:588px;width:19px;height:9px;border-radius:5px;border:1px solid #777"></div>
<svg style="left:852.5px;top:590px" width="12" height="6"><path d="M0.5 0.5H4.5L3 2.5V4.5L2 5V2.5Z" fill="#888"/><path d="M7 1.5L8.8 3.3L10.6 1.5" stroke="#888" stroke-width="1" fill="none"/></svg>
<div class="t" style="left:871px;top:588.5px;font-size:8.5px;color:#6a6a6a">Filter</div>
<svg style="left:979px;top:587px" width="8" height="11"><path d="M0.5 2H7.5M2.5 2V1Q2.5 0.5 3 0.5H5Q5.5 0.5 5.5 1V2M1.3 2.5L1.8 10H6.2L6.7 2.5" stroke="#6e6e6e" stroke-width="1" fill="none"/></svg>
<div class="a" style="left:993px;top:589px;width:1px;height:8px;background:#333"></div>
<svg style="left:1000px;top:587.5px" width="11" height="10"><rect x="0.5" y="0.5" width="10" height="9" rx="1.3" fill="none" stroke="#3569cf" stroke-width="1"/><rect x="2" y="2" width="2" height="6" fill="#3569cf"/></svg>
<svg style="left:1015px;top:587.5px" width="11" height="10"><rect x="0.5" y="0.5" width="10" height="9" rx="1.3" fill="none" stroke="#3569cf" stroke-width="1"/><rect x="2" y="2" width="2" height="6" fill="#3569cf"/></svg>

<!-- simulator toolbar -->
<div class="a" style="left:396px;top:-10px;width:278px;height:40.5px;border-radius:0 0 7px 7px;background:#383838;box-shadow:0 2px 6px rgba(0,0,0,0.35)"></div>
<div class="a" style="left:410.4px;top:7.7px;width:9.2px;height:9.2px;border-radius:50%;background:#ec6a5e"></div>
<div class="a" style="left:425px;top:7.7px;width:9.2px;height:9.2px;border-radius:50%;background:#f4bf4f"></div>
<div class="a" style="left:439.4px;top:7.7px;width:9.2px;height:9.2px;border-radius:50%;background:#61c554"></div>
<div class="t" style="left:462px;top:2px;font-size:9.5px;font-weight:bold;color:#e6e6e6">iPhone 16</div>
<div class="t" style="left:462px;top:14px;font-size:8.5px;color:#a8a8a8">iOS 18.5</div>
<svg style="left:572px;top:5px" width="15" height="13"><path d="M1 6.5L7.5 1L14 6.5M3 5V12.5H12V5M6 12.5V9H9V12.5M11 2V4" stroke="#c8c8c8" stroke-width="1.1" fill="none" stroke-linejoin="round"/><rect x="6" y="9" width="3" height="3.5" fill="#c8c8c8"/></svg>
<svg style="left:607px;top:5.5px" width="16" height="13"><path d="M1 9V2Q1 1 2 1H12" stroke="#c8c8c8" stroke-width="1" fill="none"/><rect x="3.5" y="3.5" width="12" height="9" rx="1.3" fill="none" stroke="#c8c8c8" stroke-width="1.1"/><circle cx="9.5" cy="8" r="2.3" fill="none" stroke="#c8c8c8" stroke-width="1"/><path d="M7 3.5L8 2.5H11L12 3.5" stroke="#c8c8c8" stroke-width="1" fill="none"/></svg>
<svg style="left:641px;top:5px" width="14" height="14"><rect x="4" y="5" width="9" height="8.5" rx="1.3" fill="none" stroke="#c8c8c8" stroke-width="1.1"/><path d="M1 6V3.5Q1 1.5 3 1.5H5" stroke="#c8c8c8" stroke-width="1" fill="none"/><path d="M4 0L5.6 1.5L4 3" stroke="#c8c8c8" stroke-width="1" fill="none"/></svg>

<!-- side buttons -->
<div class="a" style="left:400.2px;top:138px;width:4px;height:20.5px;border-radius:1.5px;background:#2c2c2c;border:0.6px solid #474747"></div>
<div class="a" style="left:400.2px;top:170px;width:4px;height:38px;border-radius:1.5px;background:#2c2c2c;border:0.6px solid #474747"></div>
<div class="a" style="left:400.2px;top:222px;width:4px;height:38px;border-radius:1.5px;background:#2c2c2c;border:0.6px solid #474747"></div>
<div class="a" style="left:666.2px;top:201px;width:4px;height:63px;border-radius:1.5px;background:#2c2c2c;border:0.6px solid #474747"></div>
<!-- phone body -->
<div class="a" style="left:403.3px;top:39px;width:263.7px;height:549.3px;border-radius:39px;background:#000;box-shadow:0 0 0 0.6px #2b2b2b, 0 6px 24px rgba(0,0,0,0.55), 0 0 60px rgba(0,0,0,0.35)"></div>
<div class="a" style="left:403.3px;top:39px;width:263.7px;height:549.3px;border-radius:39px;border:1.6px solid #4a4a4a"></div>
<div class="a" style="left:404.9px;top:40.6px;width:260.5px;height:546.1px;border-radius:37.5px;border:2.6px solid #2a2a2a"></div>
<!-- screen -->
<div class="a" id="screen" style="left:413.3px;top:49.5px;width:244.7px;height:529.2px;border-radius:29px;background:#ffffff;overflow:hidden">
<div class="a" style="left:0;top:0;width:245px;height:60.5px;background:#f8f8f8"></div>
<div class="a" style="left:0;top:60.3px;width:245px;height:0.7px;background:#e0e0e0"></div>
<div class="t" style="left:32.5px;top:13.7px;font-size:10px;font-weight:bold;color:#111;letter-spacing:-0.1px">11:17</div>
<div class="a" style="left:83.0px;top:6.7px;width:77.5px;height:23.3px;border-radius:12px;background:#000"></div>
<div class="a" style="left:176.8px;top:19.8px;width:1.8px;height:1.8px;border-radius:50%;background:#b8b8b8"></div>
<div class="a" style="left:179.8px;top:19.8px;width:1.8px;height:1.8px;border-radius:50%;background:#b8b8b8"></div>
<div class="a" style="left:182.8px;top:19.8px;width:1.8px;height:1.8px;border-radius:50%;background:#b8b8b8"></div>
<div class="a" style="left:185.8px;top:19.8px;width:1.8px;height:1.8px;border-radius:50%;background:#b8b8b8"></div>
<svg style="left:191.5px;top:14.0px" width="12" height="9" viewBox="0 0 12 9"><path d="M6 8.6L7.6 6.9Q6 5.6 4.4 6.9Z" fill="#111"/><path d="M2.8 5.3Q6 2.6 9.2 5.3" stroke="#111" stroke-width="1.5" fill="none"/><path d="M0.9 3.4Q6 -0.9 11.1 3.4" stroke="#111" stroke-width="1.5" fill="none"/></svg>
<div class="a" style="left:207.5px;top:14.5px;width:14.5px;height:7.5px;border-radius:2.5px;border:1px solid #c8c8c8"></div>
<div class="a" style="left:208.8px;top:15.8px;width:12px;height:5px;border-radius:1.5px;background:#111"></div>
<div class="a" style="left:222.7px;top:17.0px;width:1px;height:2.5px;background:#c8c8c8"></div>
<div class="t" style="left:76.0px;top:41.7px;font-size:11px;color:#8c8c8c;letter-spacing:-0.05px;-webkit-text-stroke:0.15px #8c8c8c">Apple Frameworks</div>
<div class="a" style="left:240.5px;top:66.5px;width:2px;height:399px;border-radius:1px;background:#a0a0a0"></div>
<svg style="left:8.5px;top:69.5px" width="60" height="60" viewBox="0 0 600 600">
<defs><linearGradient id="sky1" x1="0" y1="0" x2="0" y2="1"><stop offset="0" stop-color="#4a7fc9"/><stop offset="0.45" stop-color="#8fb5de"/><stop offset="0.85" stop-color="#d6e2ea"/></linearGradient></defs>
<rect x="22" y="20" width="558" height="558" fill="url(#sky1)"/>
<path d="M330 250Q370 150 470 140Q540 110 580 150V470H360Q320 390 340 300Z" fill="#e6edf5"/>
<path d="M22 20H210Q170 55 110 50Q70 80 22 75Z" fill="#3a5a30"/>
<path d="M22 160L50 130L80 160L110 210L140 310L165 450L22 470Z" fill="#6a8a5e"/>
<path d="M40 200L70 180L95 260L80 360L40 380Z" fill="#4e6e44"/>
<path d="M45 380V530M90 360V530M130 400V520" stroke="#4a3a2a" stroke-width="12"/>
<path d="M555 180L580 160V420L540 400Z" fill="#4e6e4c"/>
<path d="M150 440Q300 420 420 450Q500 430 580 450V520H150Z" fill="#aabaa8"/>
<path d="M22 505Q300 495 580 515V578H22Z" fill="#8aa860"/>
<path d="M172 120Q160 250 195 330Q215 385 230 425L300 440L340 390L330 300L280 190Z" fill="#7e5030"/>
<path d="M170 130Q180 60 240 45L330 35Q420 40 450 80Q465 120 450 150Q430 175 390 170L340 160Q300 165 280 185L250 200Q200 200 175 180Z" fill="#94663a"/>
<path d="M210 70Q260 50 320 55L300 90Q250 100 215 110Z" fill="#b88a4e"/>
<path d="M255 195Q300 170 350 175L390 200L370 250Q320 240 270 235Z" fill="#7a3a2a"/>
<path d="M180 210Q240 225 300 245L390 265Q405 300 380 330Q320 350 260 330Q200 310 180 270Z" fill="#d2c294"/>
<path d="M200 320Q250 345 320 335Q350 360 340 400Q330 430 300 440L260 440Q220 420 210 380Z" fill="#8a5a32"/>
<path d="M330 340L400 360L425 405L398 392L340 372Z" fill="#7a4a2a"/>
<path d="M225 420L262 432L252 570H218Z" fill="#5e3a22"/>
<path d="M290 430L340 410L335 480L322 570H290L300 480Z" fill="#6a4226"/>
</svg>
<svg style="left:91.5px;top:69.5px" width="60" height="60" viewBox="0 0 600 600">
<rect x="25" y="15" width="560" height="555" fill="#4e6e3c"/>
<path d="M25 15H585V330Q500 300 420 330L380 340Q250 300 25 320Z" fill="#3e5a34"/>
<path d="M60 15V330M110 15V320M160 15V300M500 15V330M545 15V330" stroke="#3a3028" stroke-width="18"/>
<circle cx="130" cy="230" r="45" fill="#7a9a60"/><circle cx="480" cy="110" r="35" fill="#8aa070"/>
<path d="M25 320Q150 300 300 340L585 330V440H25Z" fill="#5e8a44"/>
<path d="M25 440Q300 420 585 450V570H25Z" fill="#8a7a66"/>
<path d="M25 190Q70 180 90 230L80 300L25 310Z" fill="#5a4a44"/>
<path d="M120 350Q150 310 200 300L260 250Q330 190 420 200Q470 210 490 250L520 210L500 260Q470 310 440 320L420 400L410 470L390 470L385 400L360 410L350 520L320 530L320 430L290 420L270 500L245 500L250 420Q200 390 150 385Q120 380 120 350Z" fill="#8c8078"/>
<path d="M185 300L210 170L260 230ZM245 250L250 100L310 190Z" fill="#c4968c"/>
<path d="M320 200L330 80L380 160ZM370 190L420 90L430 170ZM420 200L440 90L460 190ZM455 230L480 140L475 240Z" fill="#8a5040"/>
</svg>
<svg style="left:174.5px;top:69.5px" width="60" height="60" viewBox="0 0 600 600">
<path d="M40 235Q120 200 180 130Q240 40 300 30Q370 30 420 90L440 60Q470 10 500 30L510 150L580 160L530 200L560 280L550 380Q520 380 470 330L450 360L420 400L430 540L400 545L395 410L370 390L350 520L320 520L330 380Q300 370 280 360L290 540L260 545L250 360L240 340L230 510L215 510L215 320Q180 290 120 290Q60 280 40 235Z" fill="#a89a7a"/>
<path d="M420 90Q470 10 500 30L510 150L500 270Q440 230 430 150Z" fill="#c89870"/>
<path d="M60 240Q140 210 200 120Q180 200 120 260Z" fill="#c0b48a"/>
<path d="M230 300Q330 360 450 330L420 400L240 350Z" fill="#6a5e4a"/>
</svg>
<svg style="left:8.5px;top:166.5px" width="60" height="60" viewBox="0 0 600 600">
<rect x="22" y="22" width="558" height="558" fill="#f1f1f1"/>
<rect x="22" y="390" width="558" height="6" fill="#cccccc"/>
<path d="M20 262Q120 290 250 270Q330 235 420 235Q500 230 560 215L580 225Q570 250 520 260Q480 280 460 310L465 360L460 395L440 395L430 350L415 345L420 395L400 395L390 345L360 340L350 395L330 395L335 340L320 330L300 395L280 395L300 320Q220 300 120 290Q60 280 20 262Z" fill="#5e5d55"/>
</svg>
<svg style="left:91.5px;top:166.5px" width="60" height="60" viewBox="0 0 600 600">
<rect x="28" y="22" width="554" height="556" fill="#5a6e4e"/>
<path d="M28 22H290L300 250Q200 220 28 260Z" fill="#6e786a"/>
<path d="M290 22H440L430 120Q380 60 340 50L300 120Z" fill="#dcdcdc"/>
<path d="M330 60L380 50L430 110L420 250L300 250Z" fill="#848a80"/>
<path d="M440 22H582V450L380 420Q400 250 440 150Z" fill="#4e7a3a"/>
<path d="M28 260Q150 300 200 420L140 578H28Z" fill="#3e6a30"/>
<path d="M150 480Q350 460 582 470V578H150Z" fill="#6a6a58"/>
<path d="M110 360Q140 290 230 250Q310 230 370 270Q420 320 490 340Q540 320 570 330L575 370Q540 390 480 380Q420 380 380 390L360 470L340 470L330 410L300 420L295 510L270 510L260 430L230 420L200 490L180 490L200 400Q150 400 120 410Z" fill="#57564e"/>
<path d="M160 300Q250 240 340 260" stroke="#a8a898" stroke-width="10" fill="none" stroke-dasharray="14 14"/>
</svg>
<svg style="left:174.5px;top:166.5px" width="60" height="60" viewBox="0 0 600 600">
<defs><linearGradient id="pt" x1="0" y1="0" x2="1" y2="1"><stop offset="0" stop-color="#48aad8"/><stop offset="1" stop-color="#5ccbcb"/></linearGradient></defs>
<rect x="28" y="22" width="557" height="558" fill="url(#pt)"/>
<path d="M40 50Q150 100 200 180Q250 240 290 320L330 350Q380 230 460 140Q520 80 580 45Q570 120 500 200Q420 300 400 400Q430 450 460 490L400 460L340 390L280 380L190 460L150 470L210 380L110 430L200 340L240 290Q180 170 40 50Z" fill="#d4905a"/>
<path d="M240 220L270 210L240 300L120 420L200 340Z" fill="#a8683a"/>
</svg>
<svg style="left:8.5px;top:263.5px" width="60" height="60" viewBox="0 0 600 600">
<path d="M85 170Q100 120 150 125L200 130Q215 95 250 90Q290 110 320 200Q360 270 430 320Q520 370 560 420Q585 470 560 520Q520 560 440 555Q390 545 380 520Q430 520 470 500Q520 470 500 440Q440 410 380 400Q330 400 300 390L320 440L360 480L380 520L350 530L320 490L280 440L250 410L230 450L210 500L160 520L140 505L185 480L200 430Q170 390 160 340L120 340L80 360L55 380L45 370L90 330Q110 300 110 270Q90 220 85 170Z" fill="#5e4a32"/>
<path d="M200 130Q215 95 250 90Q290 110 320 200L335 270L220 250Z" fill="#3e2e20"/>
<path d="M440 400Q520 430 550 450Q580 490 555 525Q520 555 450 555L390 530Q460 520 500 490Z" fill="#b8863e"/>
<path d="M95 150Q140 140 200 160L190 190Q140 180 100 190Z" fill="#8a7050"/>
</svg>
<svg style="left:91.5px;top:263.5px" width="60" height="60" viewBox="0 0 600 600">
<defs><linearGradient id="vg" x1="0" y1="0" x2="0" y2="1"><stop offset="0" stop-color="#f6f2ee"/><stop offset="0.15" stop-color="#f0e8e0"/><stop offset="0.55" stop-color="#d8c6ae"/><stop offset="1" stop-color="#c8ae8e"/></linearGradient></defs>
<rect x="25" y="20" width="560" height="560" fill="url(#vg)"/>
<path d="M25 120Q80 110 130 140L130 420L25 420Z" fill="#b89c80"/>
<path d="M280 180Q330 140 380 170L460 240Q520 260 585 300V400H280Z" fill="#b8a48a"/>
<path d="M130 120Q150 30 210 35Q260 50 270 120L240 150Q190 140 180 170L200 230Q250 240 300 220Q380 200 420 150Q470 130 520 180Q470 170 430 190Q380 250 310 300L280 320L290 400L310 500L300 540L270 550L280 510L260 420L240 380L250 500L240 570L200 570L220 520L210 400L190 350L200 460L160 470L150 400Q130 300 130 120Z" fill="#4e463e"/>
<path d="M140 170Q160 250 180 300L150 320Q130 240 140 170Z" fill="#8a7a60"/>
<path d="M180 170Q250 230 360 220L300 280Q220 260 180 220Z" fill="#76726e"/>
</svg>
<svg style="left:174.5px;top:263.5px" width="60" height="60" viewBox="0 0 600 600">
<path d="M40 320Q120 300 200 250Q260 180 330 170Q380 160 400 150L410 90Q440 40 490 45Q540 60 570 130Q570 180 520 190Q470 210 450 260L440 320L430 380L440 400L420 410L400 360L370 350L350 400L380 420L360 440L330 400L290 380L280 470L300 520L330 540L290 550L270 520L250 470L240 360Q200 330 120 330Q70 330 40 320Z" fill="#6a5442"/>
<path d="M410 90Q440 40 490 45Q520 60 510 90Q460 80 410 100Z" fill="#a89078"/>
<path d="M370 250Q420 240 440 300L400 350Q370 300 370 250Z" fill="#cbb9a0"/>
</svg>
<svg style="left:8.5px;top:361.5px" width="60" height="60" viewBox="0 0 600 600">
<path d="M30 40Q60 20 90 50L130 80L160 160Q200 110 280 100Q380 110 470 160L575 190L520 210Q460 240 400 260L370 320L350 380L370 460L340 490L320 470L330 400L300 380L300 470L280 560L260 560L270 460L260 380Q220 380 190 360L160 400L145 510L125 510L140 400L110 400L80 440L70 420L100 370Q140 330 150 260Q130 190 100 130L60 110Q30 90 30 40Z" fill="#9c8c6e"/>
<path d="M160 160Q200 110 280 100Q380 110 470 160L575 190L470 190Q350 150 240 170L180 200Z" fill="#7c7a70"/>
</svg>
<svg style="left:91.5px;top:361.5px" width="60" height="60" viewBox="0 0 600 600">
<rect x="25" y="40" width="560" height="560" fill="#9ccc7c"/>
<rect x="100" y="40" width="430" height="560" fill="#7c8890"/>
<rect x="100" y="40" width="430" height="260" fill="#b4bcc6"/>
<path d="M100 300L140 260L170 310L200 270L230 320L230 400L100 400Z" fill="#2e6a4e"/>
<path d="M100 400Q250 380 400 420L530 440V600H100Z" fill="#6a7a6c"/>
<path d="M380 520L530 440V600H330Z" fill="#1a1a1a"/>
<path d="M320 40H530V210L420 200Q370 150 330 80Z" fill="#1e1e1e"/>
<path d="M140 70Q200 40 270 80L290 130L250 100Q210 80 190 100L210 130Q210 200 220 260Q280 190 330 190Q420 220 480 280L530 330V440L470 400L440 480L400 500L420 440L380 430L340 500L320 560L290 560L310 480L300 420Q250 380 230 310Q190 240 180 130Q150 110 140 70Z" fill="#b0682c"/>
<path d="M260 270Q310 260 340 300L310 330Q270 320 260 270Z" fill="#d8a048"/>
<path d="M130 390Q170 360 210 380L230 430L180 460L130 440Z" fill="#8a5a30"/>
</svg>
<svg style="left:174.5px;top:361.5px" width="60" height="60" viewBox="0 0 600 600">
<path d="M40 430Q80 350 120 300Q160 220 230 170Q300 120 340 60Q380 30 440 40L490 50Q560 90 580 140Q570 180 550 200L500 170Q450 160 400 180L360 220L340 300L330 400L300 400L320 310L280 300L260 360L250 430L240 500L290 550L220 560L215 480L200 420L180 480L150 510L170 540L110 545L130 460L130 350Q80 390 40 430Z" fill="#4a4236"/>
<path d="M340 60Q380 30 440 40L490 50Q560 90 580 140L500 120Q420 100 340 80Z" fill="#6e6656"/>
<path d="M200 230Q280 200 330 230L300 300L220 290Z" fill="#7a6e58"/>
</svg>
<svg style="left:8.5px;top:459.5px" width="60" height="60" viewBox="0 0 600 600">
<path d="M50 80Q80 55 110 80Q110 150 140 280Q190 380 260 410Q340 400 400 450Q460 490 560 500L580 510L480 510L420 500L420 560L400 590L360 590L370 540L330 540L320 600L270 600L270 530Q220 510 190 460Q120 360 80 220Q60 140 70 100Z" fill="#5e5a52"/>
</svg>
<svg style="left:91.5px;top:459.5px" width="60" height="60" viewBox="0 0 600 600">
<path d="M130 80Q165 60 175 90Q165 150 170 250Q190 330 260 320Q370 280 460 300Q540 300 560 380Q570 420 540 430Q500 380 440 400Q380 440 330 450L300 480L330 556L300 556L280 500L260 460L240 500L250 556L210 556L230 460Q160 420 150 330Q130 200 130 80Z" fill="#7a7a70"/>
</svg>
<svg style="left:174.5px;top:459.5px" width="60" height="60" viewBox="0 0 600 600">
<path d="M40 60Q90 100 130 180Q160 250 200 300L240 290Q300 200 380 180Q470 160 570 150Q520 200 460 240Q400 280 360 320L440 350L560 380Q470 400 380 370L360 420L380 480L350 460L330 420L270 420L240 470L260 500L220 490L200 440Q160 430 120 440L100 420Q130 380 170 370Q100 280 70 180Q50 120 40 60Z" fill="#1c2a44"/>
<path d="M120 390Q160 370 200 380L170 410Z" fill="#5a9ac0"/>
<path d="M100 420L130 410L120 430Z" fill="#c04040"/>
</svg>
<div class="t" style="left:11.62px;top:133.14px;width:54.77px;font-size:8.10px;font-weight:bold;color:#111;transform:scaleX(1.026);transform-origin:50% 50%">Tyrannosaur...</div>
<div class="t" style="left:90.23px;top:133.33px;width:63.45px;font-size:10.47px;font-weight:bold;color:#111;transform:scaleX(0.900);transform-origin:50% 50%">Stegosaurus</div>
<div class="t" style="left:176.76px;top:133.33px;width:56.47px;font-size:10.47px;font-weight:bold;color:#111;transform:scaleX(0.967);transform-origin:50% 50%">Triceratops</div>
<div class="t" style="left:7.72px;top:230.16px;width:62.27px;font-size:9.50px;font-weight:bold;color:#111;transform:scaleX(0.920);transform-origin:50% 50%">Brontosaurus</div>
<div class="t" style="left:90.55px;top:230.16px;width:62.81px;font-size:9.50px;font-weight:bold;color:#111;transform:scaleX(0.909);transform-origin:50% 50%">Ankylosaurus</div>
<div class="t" style="left:176.50px;top:230.16px;width:57.01px;font-size:9.50px;font-weight:bold;color:#111;transform:scaleX(0.958);transform-origin:50% 50%">Pterodactyls</div>
<div class="t" style="left:8.22px;top:327.07px;width:61.75px;font-size:10.20px;font-weight:bold;color:#111;transform:scaleX(0.920);transform-origin:50% 50%">Spinosaurus</div>
<div class="t" style="left:92.54px;top:327.07px;width:58.93px;font-size:10.20px;font-weight:bold;color:#111;transform:scaleX(0.933);transform-origin:50% 50%">Velociraptor</div>
<div class="t" style="left:174.97px;top:328.17px;width:60.16px;font-size:8.66px;font-weight:bold;color:#111;transform:scaleX(0.962);transform-origin:50% 50%">Pachycephal...</div>
<div class="t" style="left:6.89px;top:425.28px;width:63.52px;font-size:12.43px;font-weight:bold;color:#111;transform:scaleX(0.896);transform-origin:50% 50%">Iguanodon</div>
<div class="t" style="left:92.24px;top:426.83px;width:59.12px;font-size:8.94px;font-weight:bold;color:#111;transform:scaleX(0.924);transform-origin:50% 50%">Parasaurolo...</div>
<div class="t" style="left:173.03px;top:425.28px;width:64.24px;font-size:12.43px;font-weight:bold;color:#111;transform:scaleX(0.883);transform-origin:50% 50%">Allosaurus</div>
<div class="t" style="left:7.22px;top:527.32px;width:63.57px;font-size:9.08px;font-weight:bold;color:#111;transform:scaleX(0.881);transform-origin:50% 50%">Brachiosaurus</div>
<div class="t" style="left:88.50px;top:524.68px;width:67.01px;font-size:12.43px;font-weight:bold;color:#111;transform:scaleX(0.821);transform-origin:50% 50%">Gallimimus</div>
<div class="t" style="left:179.78px;top:527.32px;width:50.44px;font-size:9.08px;font-weight:bold;color:#111;transform:scaleX(1.090);transform-origin:50% 50%">Microraptor</div>
<div class="a" style="left:78.5px;top:520.5px;width:87px;height:3.2px;border-radius:2px;background:#000"></div>

</div>
<!-- cursor -->
<svg style="left:550.5px;top:411.5px" width="10" height="14" viewBox="0 0 10 14"><path d="M1 1V11.5L3.6 9.2L5.4 13L7.2 12.2L5.5 8.5H9Z" fill="#000" stroke="#fff" stroke-width="0.9" stroke-linejoin="round"/></svg>

</body></html>
